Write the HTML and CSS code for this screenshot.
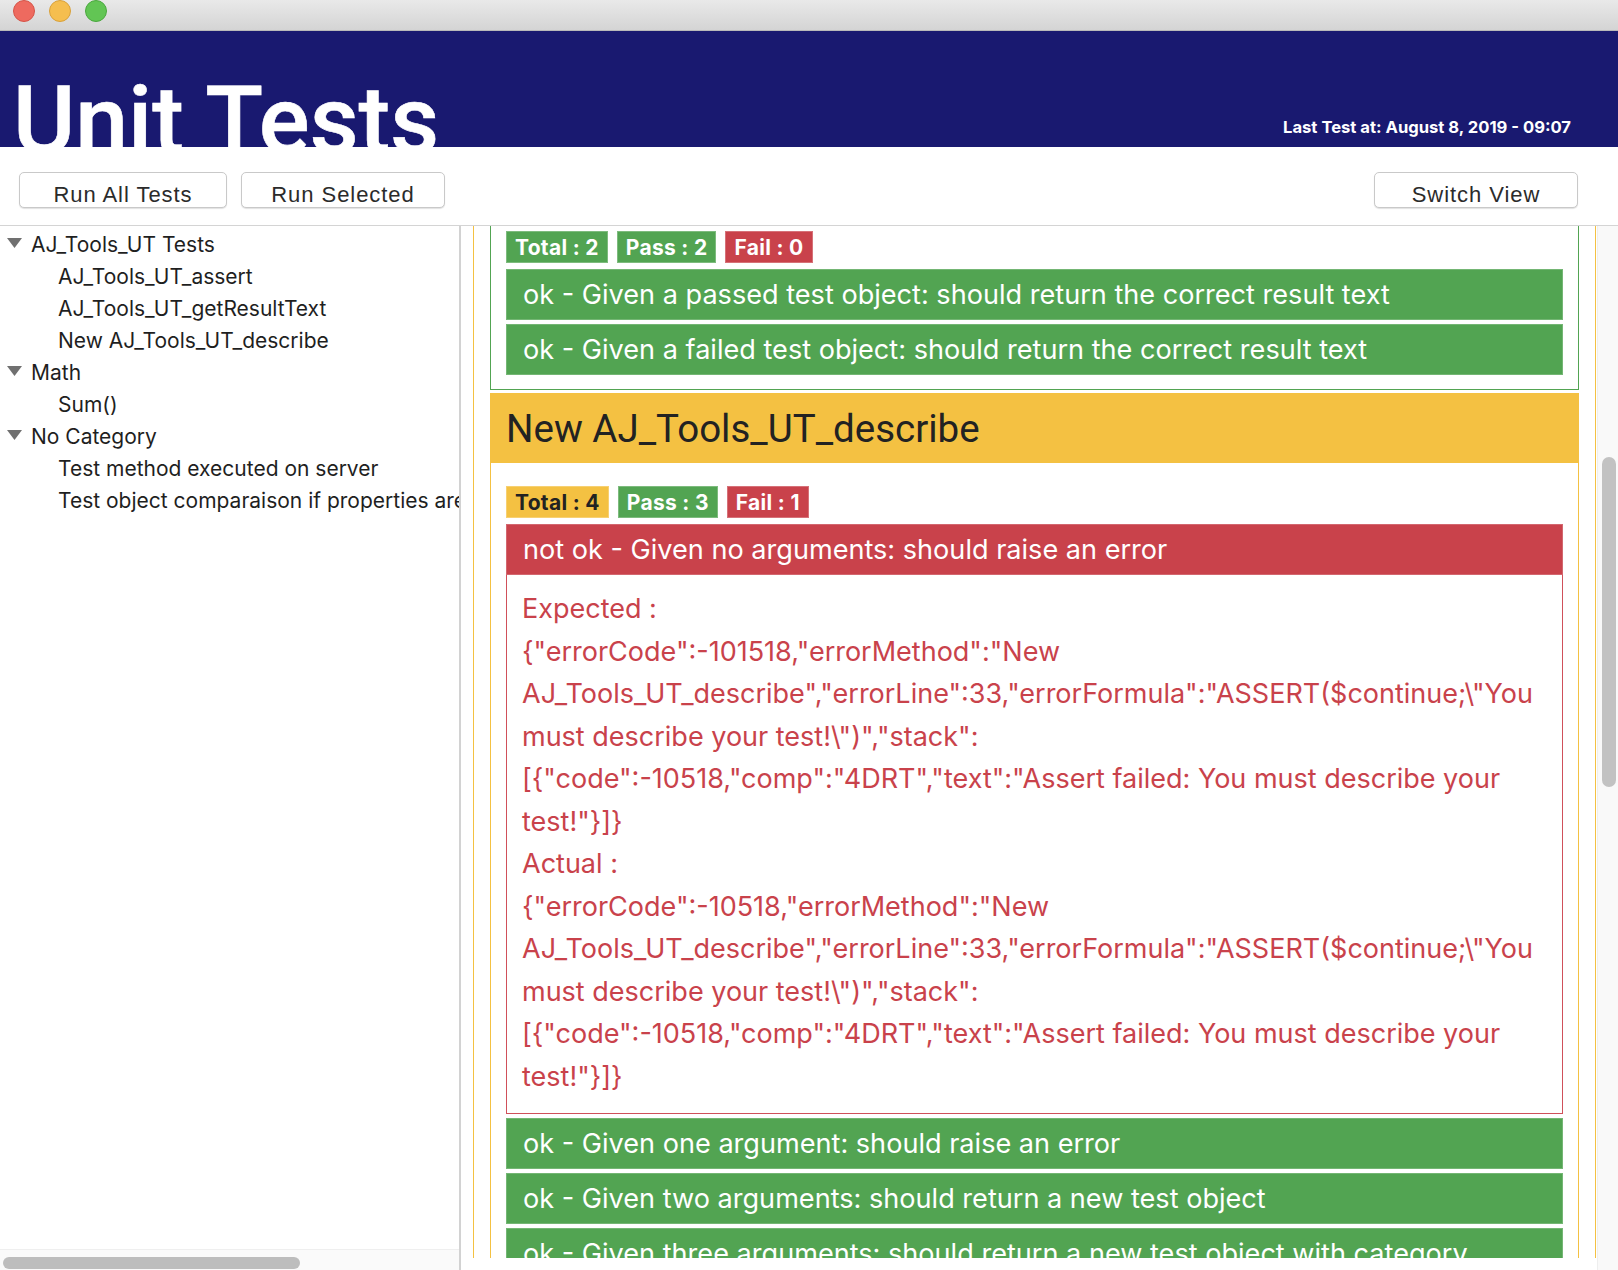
FILE: index.html
```html
<!DOCTYPE html>
<html lang="en">
<head>
<meta charset="utf-8">
<title>Unit Tests</title>
<link rel="stylesheet" href="styles.css">
</head>
<body>
<div class="window">
  <div class="titlebar">
    <span class="light light-red"></span>
    <span class="light light-yellow"></span>
    <span class="light light-green"></span>
  </div>
  <header class="header">
    <h1 class="title">Unit Tests</h1>
    <div class="last-test">Last Test at: August 8, 2019 - 09:07</div>
  </header>
  <div class="toolbar">
    <button class="btn btn-wide">Run All Tests</button>
    <button class="btn">Run Selected</button>
    <span class="toolbar-spacer"></span>
    <button class="btn">Switch View</button>
  </div>
  <div class="main">
    <aside class="sidebar">
      <ul class="tree">
        <li class="tree-row tree-parent"><svg class="disclosure" viewBox="0 0 15 10"><polygon points="0,0 15,0 7.5,10"/></svg><span>AJ_Tools_UT Tests</span></li>
        <li class="tree-row tree-child">AJ_Tools_UT_assert</li>
        <li class="tree-row tree-child">AJ_Tools_UT_getResultText</li>
        <li class="tree-row tree-child">New AJ_Tools_UT_describe</li>
        <li class="tree-row tree-parent"><svg class="disclosure" viewBox="0 0 15 10"><polygon points="0,0 15,0 7.5,10"/></svg><span>Math</span></li>
        <li class="tree-row tree-child">Sum()</li>
        <li class="tree-row tree-parent"><svg class="disclosure" viewBox="0 0 15 10"><polygon points="0,0 15,0 7.5,10"/></svg><span>No Category</span></li>
        <li class="tree-row tree-child">Test method executed on server</li>
        <li class="tree-row tree-child">Test object comparaison if properties are the same</li>
      </ul>
      <div class="hscroll"><div class="hscroll-thumb"></div></div>
    </aside>
    <section class="results">
      <div class="results-col">
        <div class="viewport">
          <div class="suite">
            <div class="group group-pass">
              <div class="group-head">AJ_Tools_UT_getResultText</div>
              <div class="group-body">
                <div class="badges">
                  <span class="badge badge-green">Total : 2</span>
                  <span class="badge badge-green">Pass : 2</span>
                  <span class="badge badge-red">Fail : 0</span>
                </div>
                <div class="test test-ok">ok - Given a passed test object: should return the correct result text</div>
                <div class="test test-ok">ok - Given a failed test object: should return the correct result text</div>
              </div>
            </div>
            <div class="group group-warn">
              <div class="group-head">New AJ_Tools_UT_describe</div>
              <div class="group-body">
                <div class="badges">
                  <span class="badge badge-yellow">Total : 4</span>
                  <span class="badge badge-green">Pass : 3</span>
                  <span class="badge badge-red">Fail : 1</span>
                </div>
                <div class="test test-fail">not ok - Given no arguments: should raise an error</div>
                <div class="details">Expected :<br>{"errorCode":-101518,"errorMethod":"New<br>AJ_Tools_UT_describe","errorLine":33,"errorFormula":"ASSERT($continue;\"You<br>must describe your test!\")","stack":<br>[{"code":-10518,"comp":"4DRT","text":"Assert failed: You must describe your<br>test!"}]}<br>Actual :<br>{"errorCode":-10518,"errorMethod":"New<br>AJ_Tools_UT_describe","errorLine":33,"errorFormula":"ASSERT($continue;\"You<br>must describe your test!\")","stack":<br>[{"code":-10518,"comp":"4DRT","text":"Assert failed: You must describe your<br>test!"}]}</div>
                <div class="test test-ok test-after">ok - Given one argument: should raise an error</div>
                <div class="test test-ok">ok - Given two arguments: should return a new test object</div>
                <div class="test test-ok">ok - Given three arguments: should return a new test object with category</div>
              </div>
            </div>
          </div>
        </div>
        <div class="viewport-foot"></div>
      </div>
      <div class="vscroll"><div class="vscroll-thumb"></div></div>
    </section>
  </div>
</div>
</body>
</html>
```

FILE: styles.css
```css
* { box-sizing: border-box; }

html, body {
  margin: 0;
  padding: 0;
  background: #ffffff;
}

body {
  width: 1618px;
  height: 1270px;
  overflow: hidden;
  font-family: "Inter", "Liberation Sans", sans-serif;
}

.window {
  display: flex;
  flex-direction: column;
  height: 1270px;
}

/* ---------- title bar ---------- */
.titlebar {
  height: 31px;
  flex: none;
  display: flex;
  align-items: center;
  gap: 14px;
  padding: 0 0 8px 13px;
  background: linear-gradient(#e9e9e9, #d4d4d4);
  border-bottom: 1px solid #b9b9b9;
}

.light {
  width: 22px;
  height: 22px;
  border-radius: 50%;
  display: block;
}
.light-red { background: #ee6a5f; border: 1px solid #d65448; }
.light-yellow { background: #f5be4f; border: 1px solid #d9a13a; }
.light-green { background: #62c554; border: 1px solid #4aa83e; }

/* ---------- header ---------- */
.header {
  height: 116px;
  flex: none;
  background: #191970;
  display: flex;
  justify-content: space-between;
  align-items: flex-start;
  overflow: hidden;
}

.title {
  margin: 42px 0 0 13px;
  font-family: "Roboto", sans-serif;
  font-weight: 500;
  font-size: 95px;
  line-height: 95px;
  color: #ffffff;
  white-space: nowrap;
  -webkit-text-stroke: 0.6px #ffffff;
}

.last-test {
  margin: 86px 47px 0 0;
  font-family: "Inter", sans-serif;
  font-weight: 700;
  font-size: 16.6px;
  line-height: 20px;
  color: #ffffff;
}

/* ---------- toolbar ---------- */
.toolbar {
  height: 79px;
  flex: none;
  display: flex;
  align-items: flex-start;
  padding: 25px 40px 0 19px;
  gap: 14px;
  border-bottom: 1px solid #d4d4d4;
}

.toolbar-spacer { flex: 1; }

.btn {
  width: 204px;
  height: 36px;
  background: #ffffff;
  border: 1px solid #c9c9c9;
  border-radius: 5px;
  box-shadow: 0 1px 1px rgba(0, 0, 0, 0.12);
  font-family: "Liberation Sans", Arial, sans-serif;
  font-size: 22px;
  letter-spacing: 0.95px;
  color: #2b2b2b;
  padding: 9px 0 0 0;
  line-height: 25px;
}
.btn-wide { width: 208px; }

/* ---------- main ---------- */
.main {
  flex: 1;
  display: flex;
  min-height: 0;
}

.sidebar {
  width: 461px;
  flex: none;
  display: flex;
  flex-direction: column;
  border-right: 2px solid #d2d2d2;
}

.tree {
  list-style: none;
  margin: 0;
  padding: 2px 0 0 0;
  flex: 1;
  overflow: hidden;
}

.tree-row {
  height: 32px;
  display: flex;
  align-items: center;
  font-family: "Inter", sans-serif;
  font-size: 21px;
  color: #1f1f1f;
  white-space: nowrap;
  overflow: hidden;
}

.tree-parent { padding-left: 7px; }
.tree-child { padding-left: 58px; }

.disclosure {
  width: 15px;
  height: 10px;
  fill: #707070;
  margin: -2px 9px 0 0;
  flex: none;
}

.hscroll {
  height: 21px;
  flex: none;
  background: #fafafa;
  border-top: 1px solid #efefef;
  padding: 7px 0 0 3px;
}
.hscroll-thumb {
  width: 297px;
  height: 12px;
  border-radius: 6px;
  background: #bdbdbd;
}

/* ---------- results ---------- */
.results {
  flex: 1;
  display: flex;
  min-width: 0;
}

.results-col {
  flex: 1;
  display: flex;
  flex-direction: column;
  min-width: 0;
}

.viewport {
  height: 1032px;
  overflow: hidden;
  padding: 0 1px 0 12px;
}

.viewport-foot {
  flex: 1;
  background: #ffffff;
}

.vscroll {
  width: 21px;
  flex: none;
  background: #f9f9f9;
  border-left: 1px solid #eeeeee;
  padding: 231px 0 0 4px;
}
.vscroll-thumb {
  width: 14px;
  height: 330px;
  border-radius: 7px;
  background: #c2c2c2;
}

.suite {
  margin-top: -88px;
  border-left: 1px solid #f4c142;
  border-right: 1px solid #f4c142;
  padding: 0 16px 40px 16px;
}

.group {
  border: 1px solid;
  margin-bottom: 3px;
}
.group-pass { border-color: #52a452; }
.group-warn { border-color: #f4c142; }

.group-head {
  height: 69px;
  display: flex;
  align-items: center;
  padding-left: 15px;
  font-family: "Roboto", sans-serif;
  font-size: 38.5px;
  color: #222222;
}
.group-pass .group-head { background: #52a452; color: #ffffff; }
.group-warn .group-head { background: #f4c142; }

.group-body {
  padding: 23px 15px 14px 15px;
}

.badges {
  display: flex;
  gap: 9px;
  height: 32px;
  margin-bottom: 6px;
}

.badge {
  display: flex;
  align-items: center;
  padding: 0 8px;
  font-family: "Inter", sans-serif;
  font-weight: 700;
  font-size: 21px;
  letter-spacing: 0.3px;
  color: #ffffff;
  border: 1px solid rgba(255, 255, 255, 0.25);
}
.badge-green { background: #52a452; }
.badge-red { background: #c9424b; }
.badge-yellow { background: #f4c142; color: #222222; }

.test {
  height: 51px;
  display: flex;
  align-items: center;
  padding-left: 16px;
  font-family: "Inter", sans-serif;
  font-size: 27.1px;
  color: #ffffff;
  white-space: nowrap;
  overflow: hidden;
  border: 1px solid rgba(255, 255, 255, 0.2);
}
.test + .test { margin-top: 4px; }
.test-ok { background: #52a452; }
.test-fail { background: #c9424b; }
.test-after { margin-top: 4px; }

.details {
  border: 1px solid #d0505a;
  border-top: none;
  padding: 13px 15px 15px 15px;
  font-family: "Inter", sans-serif;
  font-size: 27px;
  line-height: 42.5px;
  color: #c9424b;
  white-space: nowrap;
  overflow: hidden;
}
```
